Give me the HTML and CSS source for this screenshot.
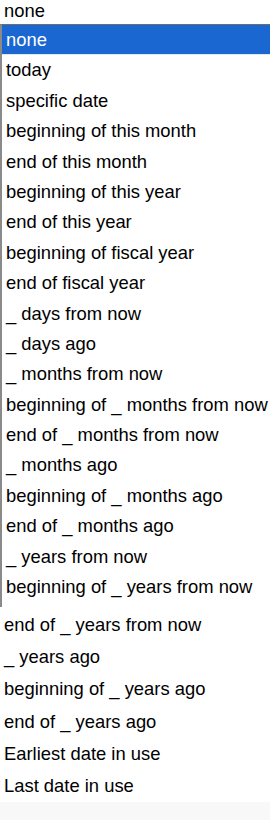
FILE: index.html
```html
<!DOCTYPE html>
<html>
<head>
<meta charset="utf-8">
<link rel="stylesheet" href="styles.css">
</head>
<body>
<div class="current">none</div>
<div class="listbox">
  <div class="opt selected">none</div>
  <div class="opt">today</div>
  <div class="opt">specific date</div>
  <div class="opt">beginning of this month</div>
  <div class="opt">end of this month</div>
  <div class="opt">beginning of this year</div>
  <div class="opt">end of this year</div>
  <div class="opt">beginning of fiscal year</div>
  <div class="opt">end of fiscal year</div>
  <div class="opt">_ days from now</div>
  <div class="opt">_ days ago</div>
  <div class="opt">_ months from now</div>
  <div class="opt">beginning of _ months from now</div>
  <div class="opt">end of _ months from now</div>
  <div class="opt">_ months ago</div>
  <div class="opt">beginning of _ months ago</div>
  <div class="opt">end of _ months ago</div>
  <div class="opt">_ years from now</div>
  <div class="opt">beginning of _ years from now</div>
</div>
<div class="rest">
  <div class="row">end of _ years from now</div>
  <div class="row">_ years ago</div>
  <div class="row">beginning of _ years ago</div>
  <div class="row">end of _ years ago</div>
  <div class="row">Earliest date in use</div>
  <div class="row">Last date in use</div>
</div>
<div class="footer"></div>
</body>
</html>
```
FILE: styles.css
```css
html, body {
  margin: 0;
  padding: 0;
  background: #ffffff;
}
body {
  font-family: "Liberation Sans", Arial, sans-serif;
  font-size: 18.4px;
  color: #000;
  width: 270px;
  overflow: hidden;
}
.current {
  height: 24px;
  line-height: 22px;
  padding-left: 4px;
}
.listbox {
  border-top: 1px solid #6e6e6e;
  border-left: 2px solid #8a8a8a;
  width: 280px;
  height: 582px;
  display: flex;
  flex-direction: column;
}
.opt {
  height: 30.4px;
  line-height: 30.4px;
  padding-left: 4px;
  white-space: nowrap;
  flex-shrink: 0;
}
.opt.selected {
  background: #1a67d2;
  color: #ffffff;
  height: 29.4px;
  line-height: 29.4px;
  border-bottom: 1px solid #dfe9f7;
}
.rest {
  display: flex;
  flex-direction: column;
  padding-top: 2px;
}
.row {
  height: 32.2px;
  line-height: 32.2px;
  padding-left: 4px;
  white-space: nowrap;
}
.footer {
  height: 30px;
  background: #f8f8f8;
}
```
